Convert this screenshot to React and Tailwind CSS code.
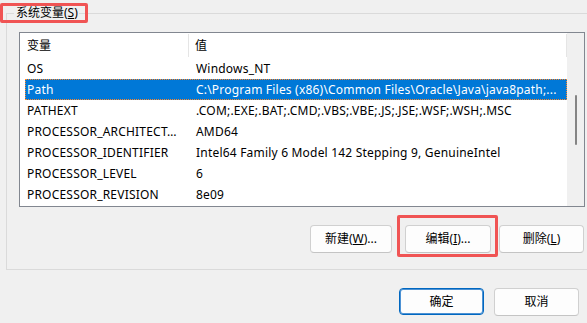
import React from "react";

const FONT = { fontFamily: '"Noto Sans", "Noto Sans CJK SC", sans-serif' };

const rows = [
  { name: "OS", value: "Windows_NT" },
  {
    name: "Path",
    value: "C:\\Program Files (x86)\\Common Files\\Oracle\\Java\\java8path;...",
    selected: true,
  },
  { name: "PATHEXT", value: ".COM;.EXE;.BAT;.CMD;.VBS;.VBE;.JS;.JSE;.WSF;.WSH;.MSC" },
  { name: "PROCESSOR_ARCHITECT…", value: "AMD64" },
  { name: "PROCESSOR_IDENTIFIER", value: "Intel64 Family 6 Model 142 Stepping 9, GenuineIntel" },
  { name: "PROCESSOR_LEVEL", value: "6" },
  { name: "PROCESSOR_REVISION", value: "8e09" },
];

const Btn = ({ children, className = "" }) => (
  <button
    className={`h-[28px] flex items-center justify-center bg-[#fdfdfd] border border-[#d0d0d0] border-b-[#c4c4c4] rounded-[4px] text-[12px] text-black ${className}`}
  >
    {children}
  </button>
);

export default function App() {
  return (
    <div
      className="relative w-[587px] h-[323px] bg-[#f0f0f0] overflow-hidden pt-[13px] pl-[6px] text-black"
      style={FONT}
    >
      <div className="absolute left-0 top-[3px] w-[88px] h-[20px] border-[3px] border-[#f05454] rounded-[2px] z-10" />

      <div className="relative w-[600px] h-[257px] border border-[#dadada]">
        <span className="absolute left-[7px] -top-[10px] bg-[#f0f0f0] pl-[2px] pr-[1px] text-[12px] leading-[18px]">
          系统变量(<u>S</u>)
        </span>

        <div className="mt-[18px] ml-[12px] w-[566px] h-[175px] border border-[#828790] bg-white flex overflow-hidden">
          <div className="flex-1 pl-[5px]">
            <div className="h-[25px] flex items-center text-[12px]">
              <div className="w-[163px] pl-[2px]">变量</div>
              <div className="w-px h-[23px] bg-[#e5e5e5]" />
              <div className="flex-1 pl-[6px]">值</div>
              <div className="w-px h-[23px] bg-[#e5e5e5]" />
            </div>
            {rows.map((r) => (
              <div
                key={r.name}
                className={`h-[21px] flex items-center text-[12px] tracking-[0.2px] whitespace-nowrap ${
                  r.selected
                    ? "bg-[#0078d7] text-white border border-dotted border-[#ff8728]"
                    : "border border-transparent"
                }`}
              >
                <div className="w-[163px] pl-[1px] overflow-hidden">{r.name}</div>
                <div className="flex-1 pl-[7px] overflow-hidden">{r.value}</div>
              </div>
            ))}
          </div>
          <div className="w-[17px] bg-[#f0f0f0] flex justify-center pt-[62px]">
            <div className="w-[2px] h-[50px] bg-[#858585] rounded-full" />
          </div>
        </div>

        <div className="mt-[18px] pl-[303px] flex">
          <Btn className="w-[82px]">
            新建(<u>W</u>)...
          </Btn>
          <div className="relative ml-[13px]">
            <Btn className="w-[86px]">
              编辑(<u>I</u>)...
            </Btn>
            <div className="absolute -left-[8px] -right-[7px] -top-[10px] -bottom-[4px] border-[3px] border-[#f05454] rounded-[2px]" />
          </div>
          <Btn className="w-[85px] ml-[8px]">
            删除(<u>L</u>)
          </Btn>
        </div>
      </div>

      <div className="mt-[18px] ml-[393px] flex gap-[10px]">
        <button className="w-[85px] h-[27px] flex items-center justify-center bg-[#fdfdfd] border border-[#0067c0] shadow-[inset_0_0_0_1px_#4d92d4] rounded-[4px] text-[12px]">
          确定
        </button>
        <Btn className="w-[85px] h-[27px]">取消</Btn>
      </div>
    </div>
  );
}
